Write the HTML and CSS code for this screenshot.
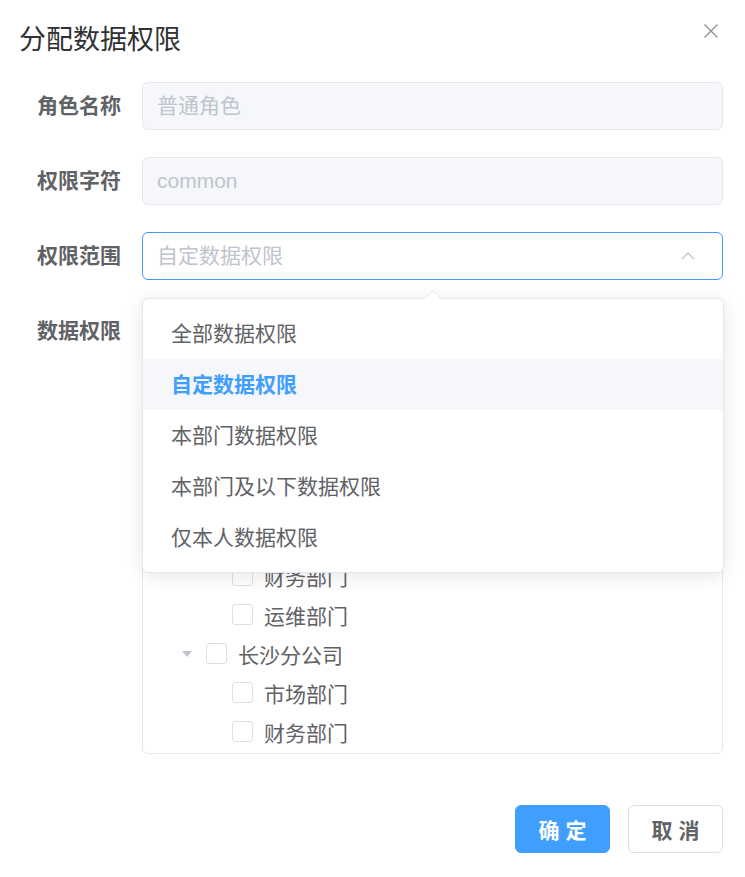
FILE: index.html
```html
<!DOCTYPE html>
<html lang="zh-CN">
<head>
<meta charset="utf-8">
<title>分配数据权限</title>
<link rel="stylesheet" href="styles.css">
</head>
<body>
<div class="dialog">
  <div class="dialog-header">
    <span class="dialog-title">分配数据权限</span>
    <button class="dialog-close" aria-label="关闭">
      <svg width="16" height="16" viewBox="0 0 16 16"><path d="M1.5 1.5 L14.5 14.5 M14.5 1.5 L1.5 14.5" stroke="#909399" stroke-width="1.4" fill="none"/></svg>
    </button>
  </div>
  <div class="dialog-body">
    <div class="form-item">
      <label class="form-label">角色名称</label>
      <div class="form-content">
        <div class="input is-disabled">普通角色</div>
      </div>
    </div>
    <div class="form-item">
      <label class="form-label">权限字符</label>
      <div class="form-content">
        <div class="input is-disabled">common</div>
      </div>
    </div>
    <div class="form-item">
      <label class="form-label">权限范围</label>
      <div class="form-content select">
        <div class="input is-focus">
          <span class="select-value">自定数据权限</span>
          <svg class="select-arrow" width="14" height="8" viewBox="0 0 14 8"><path d="M1 7 L7 1 L13 7" stroke="#c0c4cc" stroke-width="1.3" fill="none"/></svg>
        </div>
        <div class="select-dropdown">
          <div class="popper-arrow"></div>
          <ul class="dropdown-list">
            <li class="dropdown-item">全部数据权限</li>
            <li class="dropdown-item selected">自定数据权限</li>
            <li class="dropdown-item">本部门数据权限</li>
            <li class="dropdown-item">本部门及以下数据权限</li>
            <li class="dropdown-item">仅本人数据权限</li>
          </ul>
        </div>
      </div>
    </div>
    <div class="form-item last">
      <label class="form-label">数据权限</label>
      <div class="form-content">
        <div class="tree-tools covered">
          <span class="cb-inline"><span class="checkbox"></span>展开/折叠</span>
          <span class="cb-inline"><span class="checkbox"></span>全选/全不选</span>
          <span class="cb-inline"><span class="checkbox"></span>父子联动</span>
        </div>
        <div class="tree">
          <div class="tree-node lv0 covered"><span class="expand open"></span><span class="checkbox"></span><span class="node-label">若依科技</span></div>
          <div class="tree-node lv1 covered"><span class="expand open"></span><span class="checkbox"></span><span class="node-label">深圳总公司</span></div>
          <div class="tree-node lv2 covered"><span class="expand leaf"></span><span class="checkbox"></span><span class="node-label">研发部门</span></div>
          <div class="tree-node lv2 covered"><span class="expand leaf"></span><span class="checkbox"></span><span class="node-label">市场部门</span></div>
          <div class="tree-node lv2 covered"><span class="expand leaf"></span><span class="checkbox"></span><span class="node-label">测试部门</span></div>
          <div class="tree-node lv2"><span class="expand leaf"></span><span class="checkbox"></span><span class="node-label">财务部门</span></div>
          <div class="tree-node lv2"><span class="expand leaf"></span><span class="checkbox"></span><span class="node-label">运维部门</span></div>
          <div class="tree-node lv1"><span class="expand open"></span><span class="checkbox"></span><span class="node-label">长沙分公司</span></div>
          <div class="tree-node lv2"><span class="expand leaf"></span><span class="checkbox"></span><span class="node-label">市场部门</span></div>
          <div class="tree-node lv2"><span class="expand leaf"></span><span class="checkbox"></span><span class="node-label">财务部门</span></div>
        </div>
      </div>
    </div>
  </div>
  <div class="dialog-footer">
    <button class="btn btn-primary">确 定</button>
    <button class="btn btn-default">取 消</button>
  </div>
</div>
</body>
</html>
```

FILE: styles.css
```css
* { box-sizing: border-box; }
html, body { margin: 0; padding: 0; background: #ffffff; }
body {
  font-family: "Liberation Sans", "Noto Sans CJK SC", sans-serif;
  font-size: 21px;
  color: #606266;
}
.dialog {
  position: relative;
  width: 745px;
  min-height: 877px;
  background: #fff;
}
.dialog-header {
  padding: 20px 20px 0 19px;
  height: 60px;
}
.dialog-title {
  font-size: 27px;
  line-height: 40px;
  color: #303133;
  font-weight: 400;
}
.dialog-close {
  position: absolute;
  top: 23px;
  right: 26px;
  border: 0;
  background: transparent;
  padding: 0;
  width: 16px;
  height: 16px;
  display: block;
}
.dialog-close svg { display: block; }
.dialog-body {
  padding: 22px 22px 0 20px;
}
.form-item {
  display: flex;
  margin-bottom: 27px;
}
.form-item.last { margin-bottom: 51px; }
.form-label {
  width: 122px;
  flex: 0 0 122px;
  text-align: right;
  padding-right: 21px;
  line-height: 48px;
  font-weight: 700;
  color: #606266;
  font-size: 21px;
}
.form-content {
  flex: 1;
  position: relative;
}
.input {
  height: 48px;
  border: 1px solid #dcdfe6;
  border-radius: 6px;
  padding: 0 14px;
  line-height: 46px;
  font-size: 21px;
  color: #606266;
  display: flex;
  align-items: center;
}
.input.is-disabled {
  background: #f5f7fa;
  border-color: #e4e7ed;
  color: #c0c4cc;
}
.input.is-focus {
  border-color: #409eff;
  justify-content: space-between;
}
.select-value { color: #c0c4cc; }
.select-arrow { margin-right: 13px; display: block; }
.select-dropdown {
  position: absolute;
  top: 66px;
  left: 0;
  width: 582px;
  background: #fff;
  border: 1px solid #e4e7ed;
  border-radius: 6px;
  box-shadow: 0 3px 18px rgba(0, 0, 0, 0.1);
  z-index: 10;
}
.popper-arrow {
  position: absolute;
  top: -9px;
  left: 281px;
  width: 0;
  height: 0;
  border-left: 9px solid transparent;
  border-right: 9px solid transparent;
  border-bottom: 9px solid #e4e7ed;
}
.popper-arrow::after {
  content: "";
  position: absolute;
  top: 1px;
  left: -8px;
  border-left: 8px solid transparent;
  border-right: 8px solid transparent;
  border-bottom: 8px solid #fff;
}
.dropdown-list {
  list-style: none;
  margin: 0;
  padding: 9px 0;
}
.dropdown-item {
  height: 51px;
  line-height: 51px;
  padding: 0 28px;
  font-size: 21px;
  color: #606266;
}
.dropdown-item.selected {
  color: #409eff;
  font-weight: 700;
  background: #f5f7fa;
}
.covered { visibility: hidden; }
.tree-tools {
  height: 48px;
  display: flex;
  align-items: center;
  gap: 40px;
}
.cb-inline {
  display: flex;
  align-items: center;
  gap: 12px;
}
.checkbox {
  display: inline-block;
  width: 21px;
  height: 21px;
  border: 1px solid #dcdfe6;
  border-radius: 3px;
  background: #fff;
  flex: 0 0 21px;
}
.tree {
  margin-top: 4px;
  border: 1px solid #e5e6e7;
  border-radius: 6px;
  padding-top: 1px;
  padding-bottom: 2px;
}
.tree-node {
  height: 39px;
  display: flex;
  align-items: center;
}
.tree-node.lv0 { padding-left: 0; }
.tree-node.lv1 { padding-left: 27px; }
.tree-node.lv2 { padding-left: 54px; }
.expand {
  width: 36px;
  height: 39px;
  position: relative;
  flex: 0 0 36px;
}
.tree-node.lv2 .expand { width: 35px; flex-basis: 35px; }
.expand.open::after {
  content: "";
  position: absolute;
  left: 12px;
  top: 17px;
  border-left: 5px solid transparent;
  border-right: 5px solid transparent;
  border-top: 6px solid #c0c4cc;
}
.node-label {
  margin-left: 11px;
  font-size: 21px;
  color: #606266;
}
.dialog-footer {
  display: flex;
  justify-content: flex-end;
  gap: 18px;
  padding: 0 22px 0 20px;
}
.btn {
  width: 95px;
  height: 48px;
  border-radius: 6px;
  font-family: "Liberation Sans", "Noto Sans CJK SC", sans-serif;
  font-size: 21px;
  font-weight: 700;
  padding: 0;
  cursor: pointer;
}
.btn-primary {
  background: #409eff;
  border: 1px solid #409eff;
  color: #fff;
}
.btn-default {
  background: #fff;
  border: 1px solid #dcdfe6;
  color: #606266;
}
```
